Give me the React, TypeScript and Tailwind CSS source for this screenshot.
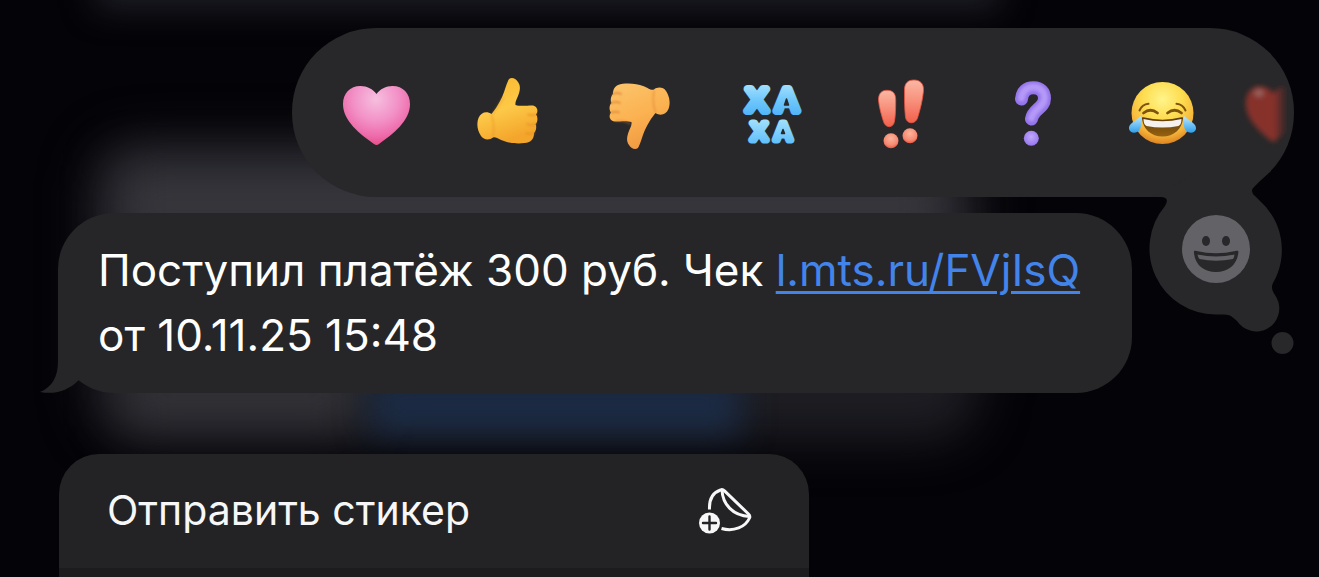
import type { ReactNode } from "react";

const HEART =
  "M40.5 21C37 16 31 13 24.5 13C14 13 7 20.5 7 31C7 48 24 61 38 71Q40.5 73 43 71C57 61 74 48 74 31C74 20.5 67 13 56.5 13C50 13 44 16 40.5 21Z";

const HAND =
  "M41 8C42 4 48 4 51 9C54 13 53 18 51 23C49.500 27 48 29 48.500 32C53 33.500 60 32.500 65 32.500C70 32.500 72 38 69 41.500C71 44 71 49 68.500 51C70 54 69 58 67 60C67 64 66 67 62 69C55 71.500 43 70.500 37 68C32 66.500 29 63 26 64.500C23 67 17 67.500 14 63C10 57 9.500 50 11.500 45C14 39 20 38 24.500 41C28 37 33 29 35.500 23C38 17 39 12 41 8Z";

function Icon({ children }: { children: ReactNode }) {
  return (
    <svg viewBox="0 0 80 80" className="block size-20" aria-hidden="true">
      {children}
    </svg>
  );
}

function PinkHeart() {
  return (
    <Icon>
      <defs>
        <radialGradient id="pink" gradientUnits="userSpaceOnUse" cx="40" cy="26" r="46">
          <stop offset="0" stopColor="#f6bfdf" />
          <stop offset="0.5" stopColor="#f290c6" />
          <stop offset="0.8" stopColor="#ee6cab" />
          <stop offset="1" stopColor="#ea4f8c" />
        </radialGradient>
      </defs>
      <path d={HEART} fill="url(#pink)" />
    </Icon>
  );
}

function ThumbUp() {
  return (
    <Icon>
      <defs>
        <linearGradient id="up" x1="0" y1="0" x2="0.3" y2="1">
          <stop offset="0" stopColor="#fbb82f" />
          <stop offset="0.55" stopColor="#fdc948" />
          <stop offset="1" stopColor="#f4a62c" />
        </linearGradient>
        <filter id="soft-up" x="-20%" y="-20%" width="140%" height="140%">
          <feGaussianBlur stdDeviation="0.8" />
        </filter>
      </defs>
      <path d={HAND} fill="url(#up)" />
      <g fill="none" stroke="#e58f22" strokeWidth="1.6" strokeLinecap="round" filter="url(#soft-up)" opacity="0.8">
        <path d="M69 41.500Q64 43 61 41.500M68.500 51Q64 53 60 51M67 60Q62 62 59 60" />
        <path d="M24.500 42Q28 52 26 63" opacity="0.6" />
        <path d="M36 25Q31 34 26 41" opacity="0.5" />
      </g>
    </Icon>
  );
}

function ThumbDown() {
  return (
    <Icon>
      <defs>
        <linearGradient id="down" x1="0.7" y1="1" x2="0.3" y2="0">
          <stop offset="0" stopColor="#fcc268" />
          <stop offset="0.5" stopColor="#fbb150" />
          <stop offset="1" stopColor="#ef9640" />
        </linearGradient>
        <filter id="soft-down" x="-20%" y="-20%" width="140%" height="140%">
          <feGaussianBlur stdDeviation="0.8" />
        </filter>
      </defs>
      <g transform="translate(-1 -1) rotate(180 41.500 41)">
        <path d={HAND} fill="url(#down)" />
        <g fill="none" stroke="#d8792e" strokeWidth="1.6" strokeLinecap="round" filter="url(#soft-down)" opacity="0.8">
          <path d="M69 41.500Q64 43 61 41.500M68.500 51Q64 53 60 51M67 60Q62 62 59 60" />
          <path d="M24.500 42Q28 52 26 63" opacity="0.6" />
          <path d="M50 30Q55 34 64 33" opacity="0.6" />
        </g>
      </g>
    </Icon>
  );
}

function Haha() {
  return (
    <Icon>
      <defs>
        <linearGradient id="ha-top" gradientUnits="userSpaceOnUse" x1="0" y1="11" x2="0" y2="43">
          <stop offset="0" stopColor="#a4e0fd" />
          <stop offset="0.5" stopColor="#70c8fb" />
          <stop offset="1" stopColor="#4fb3f8" />
        </linearGradient>
        <linearGradient id="ha-bottom" gradientUnits="userSpaceOnUse" x1="0" y1="46" x2="0" y2="72">
          <stop offset="0" stopColor="#a4e0fd" />
          <stop offset="1" stopColor="#5bbdfa" />
        </linearGradient>
      </defs>
      <g fontFamily="'Liberation Sans', sans-serif" textAnchor="middle" strokeLinejoin="round">
        <text y="38" fontSize="32" fill="url(#ha-top)" stroke="url(#ha-top)" strokeWidth="8">
          <tspan x="28">Х</tspan>
          <tspan x="58">А</tspan>
        </text>
        <text y="67" fontSize="24" fill="url(#ha-bottom)" stroke="url(#ha-bottom)" strokeWidth="7">
          <tspan x="30">Х</tspan>
          <tspan x="54">А</tspan>
        </text>
      </g>
      <g fill="#28282a" stroke="#28282a" strokeWidth="1.500" strokeLinejoin="round">
        <path d="M57.500 26L59.500 32H55.500Z" />
        <path d="M54 56.500L55.500 60.500H52.500Z" />
        <path d="M56 41L56.500 44H54ZM61 41.500L60.500 44H62.500Z" stroke="none" />
      </g>
    </Icon>
  );
}

function Emphasis() {
  return (
    <Icon>
      <defs>
        <linearGradient id="bang" x1="0" y1="0" x2="0" y2="1">
          <stop offset="0" stopColor="#fbb8a4" />
          <stop offset="0.5" stopColor="#f78f7a" />
          <stop offset="1" stopColor="#f2604c" />
        </linearGradient>
        <radialGradient id="bang-dot" cx="0.5" cy="0.35" r="0.65">
          <stop offset="0" stopColor="#fbb49c" />
          <stop offset="0.7" stopColor="#f68a72" />
          <stop offset="1" stopColor="#ef5742" />
        </radialGradient>
      </defs>
      <g transform="translate(-1 0)">
        <g fill="url(#bang)" stroke="#ee5440" strokeWidth="0.8">
          <path d="M18.500 27C18.500 20 22 17.300 27 17.300C32.500 17.300 35.700 20 35.700 27C35.700 36 35.500 42 34.500 48C33.500 55.500 25.500 55.500 23.500 48.500C21.500 42 19 34 18.500 27Z" />
          <path d="M44.500 17C44.500 10 48 7 54 7C60.500 7 64 11 63.500 18C62.500 28 60 37 57.500 45C55.500 51.500 46.500 51.500 45.500 44C44.500 36 44.500 27 44.500 17Z" />
        </g>
        <circle cx="31" cy="67.700" r="7.500" fill="url(#bang-dot)" />
        <circle cx="50" cy="62.700" r="7.500" fill="url(#bang-dot)" />
      </g>
    </Icon>
  );
}

function Question() {
  return (
    <Icon>
      <defs>
        <radialGradient id="ask-dot" cx="0.5" cy="0.4" r="0.6">
          <stop offset="0" stopColor="#c3a9fb" />
          <stop offset="1" stopColor="#9575ee" />
        </radialGradient>
        <filter id="soft-ask" x="-20%" y="-20%" width="140%" height="140%">
          <feGaussianBlur stdDeviation="1.400" />
        </filter>
      </defs>
      <g transform="translate(-1 0)">
        <g fill="none" strokeLinecap="round">
          <path d="M30.500 26C31 18.500 35.500 14.800 42.500 14.800C49.500 14.800 53.500 19 53.500 25.500C53.500 35 42 36 40.500 46" stroke="#9474ea" strokeWidth="13" />
          <path d="M30.500 25C31.500 18 36 14 42.500 14C49.500 14 53.500 19 53.500 25C53.500 34.500 42 35.500 40.500 45" stroke="#b59af8" strokeWidth="7" filter="url(#soft-ask)" />
        </g>
        <circle cx="40.300" cy="65.300" r="7.500" fill="url(#ask-dot)" />
      </g>
    </Icon>
  );
}

function Joy() {
  return (
    <Icon>
      <defs>
        <radialGradient id="face" cx="0.5" cy="0.28" r="0.72">
          <stop offset="0" stopColor="#fff48a" />
          <stop offset="0.45" stopColor="#fddc4f" />
          <stop offset="0.8" stopColor="#f6b43a" />
          <stop offset="1" stopColor="#dd8420" />
        </radialGradient>
        <linearGradient id="mouth" x1="0" y1="0" x2="0" y2="1">
          <stop offset="0" stopColor="#5e3a0c" />
          <stop offset="1" stopColor="#96630f" />
        </linearGradient>
        <linearGradient id="tear" x1="0" y1="0" x2="0" y2="1">
          <stop offset="0" stopColor="#bfe9fd" />
          <stop offset="1" stopColor="#2f9fec" />
        </linearGradient>
      </defs>
      <g transform="translate(-1 0)">
        <circle cx="40.500" cy="40" r="31" fill="url(#face)" />
        <g fill="none" stroke="#80520f" strokeLinecap="round">
          <path d="M17.500 37.500Q20 31.500 26.500 30.800M63.500 37.500Q61 31.500 54.500 30.800" strokeWidth="2" />
          <path d="M21.500 40Q28.500 34.500 35.500 40M45.500 40Q52.500 34.500 59.500 40" strokeWidth="2.800" />
        </g>
        <path d="M20 45.500C19.800 44.500 20.500 44 21.500 44.300Q40.500 49 59.500 44.300C60.500 44 61.200 44.500 61 45.500C60 56 52 63.500 40.500 63.500C29 63.500 21 56 20 45.500Z" fill="url(#mouth)" />
        <path d="M21.500 46Q40.500 50.500 59.500 46Q59.500 51.500 56.500 53Q40.500 56 24.500 53Q21.500 51.500 21.500 46Z" fill="#f4f1ee" />
        <path d="M19 43C20 48 19.500 54 17.500 57C14.500 61 8 60.500 7 56C6.200 50.500 14 47.500 19 43Z" fill="url(#tear)" />
        <path d="M62 43C61 48 61.500 54 63.500 57C66.500 61 73 60.500 74 56C74.800 50.500 67 47.500 62 43Z" fill="url(#tear)" />
      </g>
    </Icon>
  );
}

function FadedHeart() {
  return (
    <svg viewBox="0 0 40 80" className="block h-20 w-10 overflow-visible" aria-hidden="true">
      <defs>
        <linearGradient id="fade" gradientUnits="userSpaceOnUse" x1="7" y1="0" x2="57" y2="0">
          <stop offset="0" stopColor="#86302a" />
          <stop offset="0.7" stopColor="#86302a" />
          <stop offset="1" stopColor="#86302a" stopOpacity="0" />
        </linearGradient>
        <filter id="haze" x="-30%" y="-30%" width="160%" height="160%">
          <feGaussianBlur stdDeviation="2.400" />
        </filter>
      </defs>
      <g filter="url(#haze)">
        <path d={HEART} transform="translate(-14 1) scale(0.820 0.940)" fill="url(#fade)" />
        <ellipse cx="5" cy="20" rx="5" ry="4" fill="#9a6b67" opacity="0.8" />
      </g>
    </svg>
  );
}

const reactions = [
  { label: "Сердце", icon: <PinkHeart /> },
  { label: "Нравится", icon: <ThumbUp /> },
  { label: "Не нравится", icon: <ThumbDown /> },
  { label: "Ха-ха", icon: <Haha /> },
  { label: "Важно", icon: <Emphasis /> },
  { label: "Вопрос", icon: <Question /> },
  { label: "Слёзы радости", icon: <Joy /> },
  { label: "Красное сердце", icon: <FadedHeart /> },
];

function Backdrop() {
  return (
    <div className="absolute inset-0" aria-hidden="true">
      <div className="absolute -top-10 left-24 right-[320px] h-12 bg-[#1e1e26] blur-lg" />
      <div className="absolute left-[90px] right-[340px] top-[140px] h-[300px] rounded-[50px] bg-[#1d1d23] blur-xl" />
      <div className="absolute left-[116px] right-[370px] top-[165px] h-[80px] bg-[#38373d] blur-xl" />
      <div className="absolute left-[120px] top-[360px] h-[66px] w-[240px] bg-[#343338] blur-xl" />
      <div className="absolute left-[370px] top-[375px] h-[60px] w-[370px] bg-[#1b2b44] blur-lg" />
    </div>
  );
}

function EmojiPicker() {
  return (
    <button type="button" aria-label="Другие эмодзи" className="absolute -right-[6px] top-[142px] h-[190px] w-[160px]">
      <svg viewBox="0 0 160 190" className="block size-full" aria-hidden="true">
        <path
          d="M14 27H20C26 27 29 29 25 36A66 66 0 0 0 76 144.500H84C91 145 91 146 97 151A23 23 0 0 0 136.500 127.500C134 123 130 119 133 113A66 66 0 0 0 119 30L115 26Q109 21 115 16L131 0H60Z"
          fill="#28282a"
        />
        <circle cx="142.500" cy="173" r="11" fill="#28282a" />
        <circle cx="76" cy="79" r="34" fill="#636266" />
        <g fill="#28282a">
          <ellipse cx="66" cy="71" rx="4" ry="5" />
          <ellipse cx="86" cy="71" rx="4" ry="5" />
          <path d="M54 83C53.500 81 54.500 80.500 56.500 81Q76 85.500 95.500 81C98 80.500 98.800 81 98.300 83C97 95 88 102 76 102C64 102 55 95 54 83Z" />
        </g>
        <path d="M57.500 84.500Q76 88.500 94.500 84.500Q94.300 87.500 93 89Q76 92.500 59.500 89Q58 87.500 57.500 84.500Z" fill="#636266" />
      </svg>
    </button>
  );
}

function StickerIcon() {
  return (
    <svg viewBox="0 0 54 48" className="block h-12 w-[54px]" aria-hidden="true">
      <g fill="none" stroke="#f7f7f8" strokeWidth="3" strokeLinecap="butt" strokeLinejoin="round">
        <path d="M10.500 22.500C10 12 14 5.500 21.500 3Q23.500 2 25.500 3.800L49.500 27Q51.500 29 50.500 31C46.500 40 35 45 22.500 41.500" />
        <path d="M23 3C23.500 17 33.500 28.500 50.500 29.500" />
      </g>
      <circle cx="10.500" cy="36" r="10.500" fill="#f7f7f8" />
      <path d="M10.500 29.500V42.500M4 36H17" stroke="#232325" strokeWidth="2.400" strokeLinecap="round" />
    </svg>
  );
}

export default function App() {
  return (
    <main className="relative min-h-screen overflow-hidden bg-[#040408] font-['Inter','Noto_Sans',sans-serif] text-white">
      <Backdrop />
      <div className="relative pt-7">
        <section className="relative ml-[292px] mr-[25px] rounded-[84px] bg-[#28282a]">
          <EmojiPicker />
          <ul className="relative flex justify-between pb-11 pl-11 pt-[45px]">
            {reactions.map((r) => (
              <li key={r.label}>
                <button type="button" aria-label={r.label} className="block">
                  {r.icon}
                </button>
              </li>
            ))}
          </ul>
        </section>

        <article className="relative ml-[58px] mr-[187px] mt-4 rounded-[56px] bg-[#262628] py-[25px] pl-10 pr-5">
          <svg viewBox="0 0 60 60" className="absolute -left-[18px] bottom-0 size-[60px]" aria-hidden="true">
            <path d="M18 0V28C18 44 12 54 0 59C16 62 29 57 39 47L50 40V0Z" fill="#262628" />
          </svg>
          <p className="relative text-[44px] leading-[65px]">
            Поступил платёж 300 руб. Чек{" "}
            <a href="https://l.mts.ru/FVjIsQ" className="text-[#4384ea] underline decoration-[3px] underline-offset-[5px]">
              l.mts.ru/FVjIsQ
            </a>{" "}
            от 10.11.25 15:48
          </p>
        </article>

        <nav className="ml-[59px] mt-[61px] w-[750px] max-w-full overflow-hidden rounded-t-[40px] bg-[#232325]">
          <button type="button" className="flex h-[114px] w-full items-center justify-between pl-12 pr-14 text-left text-[41px] text-[#f7f7f8]">
            <span>Отправить стикер</span>
            <StickerIcon />
          </button>
          <div className="h-[9px] bg-[#1c1c1e]" />
        </nav>
      </div>
    </main>
  );
}
